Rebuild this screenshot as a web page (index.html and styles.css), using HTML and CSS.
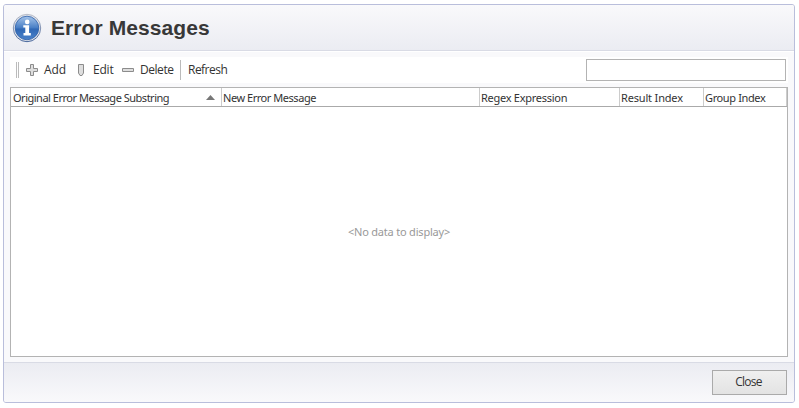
FILE: index.html
```html
<!DOCTYPE html>
<html lang="en">
<head>
<meta charset="utf-8">
<title>Error Messages</title>
<link rel="stylesheet" href="styles.css">
</head>
<body>
<main class="dialog">
  <header class="dialog-header">
    <svg class="info-icon" width="30" height="30" viewBox="0 0 30 30">
      <defs>
        <linearGradient id="disc" x1="0" y1="0" x2="0" y2="1"><stop offset="0" stop-color="#a5c4ea"/><stop offset=".48" stop-color="#4a80c6"/><stop offset=".55" stop-color="#3068b5"/><stop offset="1" stop-color="#4a82ca"/></linearGradient>
        <linearGradient id="rim" x1="0" y1="0" x2="0" y2="1"><stop offset="0" stop-color="#b9bdc9"/><stop offset="1" stop-color="#46659b"/></linearGradient>
      </defs>
      <circle cx="15" cy="15" r="13.7" fill="#dfe2e8" stroke="url(#rim)" stroke-width="1"/>
      <circle cx="15" cy="15" r="11.8" fill="url(#disc)" stroke="#2d5fa9" stroke-width=".8"/>
      <circle cx="15.2" cy="8.9" r="2.3" fill="#fff"/>
      <path d="M11.3 12.3H17.1V20.1H18.8V22.5H11.5V20.1H13.3V14.6H11.3Z" fill="#fff"/>
    </svg>
    <h1>Error Messages</h1>
  </header>
  <section class="dialog-body">
    <div class="toolbar">
      <span class="grip"></span>
      <button class="tool add"><svg width="12" height="12" viewBox="0 0 12 12"><path d="M4.5.5h3v4h4v3h-4v4h-3v-4h-4v-3h4z"/></svg><span>Add</span></button>
      <button class="tool edit"><svg width="6" height="12" viewBox="0 0 6 12"><path d="M.5.5h5v8.5l-1.5 2.5h-2l-1.5-2.5z"/></svg><span>Edit</span></button>
      <button class="tool delete"><svg width="12" height="12" viewBox="0 0 12 12"><path d="M.5 4.5h11v3h-11z"/></svg><span>Delete</span></button>
      <span class="divider"></span>
      <button class="tool refresh"><span>Refresh</span></button>
      <input class="search" type="text" aria-label="Search">
    </div>
    <div class="grid">
      <div class="columns">
        <div class="column"><span class="c1">Original Error Message Substring</span><svg class="sort" width="9" height="5" viewBox="0 0 9 5"><path d="M4.5 0L9 5H0z" fill="#777"/></svg></div>
        <div class="column"><span class="c2">New Error Message</span></div>
        <div class="column"><span class="c3">Regex Expression</span></div>
        <div class="column"><span class="c4">Result Index</span></div>
        <div class="column"><span class="c5">Group Index</span></div>
      </div>
      <div class="empty"><span>&lt;No data to display&gt;</span></div>
    </div>
  </section>
  <footer class="dialog-footer"><button class="close">Close</button></footer>
</main>
</body>
</html>
```
FILE: styles.css
```css
* { box-sizing: border-box; }
body { margin: 0; background: #fff; color: #333; font: 12px/16px "Open Sans", "Noto Sans", sans-serif; }
button { margin: 0; padding: 0; border: 0; background: none; font: inherit; color: inherit; white-space: nowrap; }
.dialog { display: flex; flex-direction: column; width: 792px; height: 399px; margin: 4px 0 0 3px; border: 1px solid #b9bedb; border-radius: 3px; background: #f9f9fb; overflow: hidden; }
.dialog-header { display: flex; align-items: center; height: 47px; padding-left: 8px; gap: 9px; border-bottom: 1px solid #d9dbe5; background: linear-gradient(#f9f9fb, #ebecf2); }
.info-icon { position: relative; top: 1px; }
h1 { margin: 2px 0 0; font: bold 21px/26px "Liberation Sans", sans-serif; letter-spacing: .08px; color: #383838; white-space: nowrap; }
.dialog-body { flex: 1; padding: 5px 6px; border-top: 1px solid #fff; }
.toolbar { display: flex; align-items: center; height: 26px; margin-bottom: 4px; padding: 0 2px 0 6px; background: #fff; }
.grip { width: 3px; height: 16px; border: solid #bbb; border-width: 0 1px; }
.tool { display: flex; align-items: center; position: relative; top: 0; }
.tool span { margin-top: 1px; }
.tool svg { fill: #dedede; stroke: #8c8c8c; }
.add { margin-left: 7px; gap: 6px; width: 52px; letter-spacing: -.15px; }
.edit { gap: 9px; width: 44px; letter-spacing: -.2px; }
.delete { gap: 6px; width: 58px; letter-spacing: -.45px; }
.divider { width: 1px; height: 20px; background: #bbb; }
.refresh { margin-left: 7px; letter-spacing: -.52px; }
.search { width: 200px; height: 22px; margin-left: auto; border: 1px solid #b3b3b3; background: #fff; }
.grid { display: flex; flex-direction: column; width: 778px; height: 270px; border: 1px solid #b3b3b3; background: #fff; font: 11px/16px "Noto Sans", sans-serif; }
.columns { display: grid; grid-template-columns: 211px 258px 140px 84px 83px; height: 19px; border-bottom: 1px solid #aaa; }
.column { display: flex; align-items: center; justify-content: space-between; padding: 2px 6px 0 1px; border-right: 1px solid #ccc; white-space: nowrap; }
.column:first-child { padding-left: 2px; }
.c1 { letter-spacing: -.49px; }
.c2 { letter-spacing: -.46px; }
.c3 { letter-spacing: -.27px; }
.c4 { letter-spacing: -.17px; }
.c5 { letter-spacing: -.38px; }
.empty { flex: 1; display: flex; align-items: center; justify-content: center; padding-top: 2px; color: #999; letter-spacing: -.2px; }
.dialog-footer { display: flex; justify-content: flex-end; height: 41px; padding: 7px 7px 0 0; border-top: 1px solid #d9dbe5; background: linear-gradient(#ebecf2, #f9f9fb); }
.close { width: 75px; height: 25px; padding-right: 2px; border: 1px solid #aaa; background: linear-gradient(#efefef, #e3e3e3); letter-spacing: -.8px; }
```
